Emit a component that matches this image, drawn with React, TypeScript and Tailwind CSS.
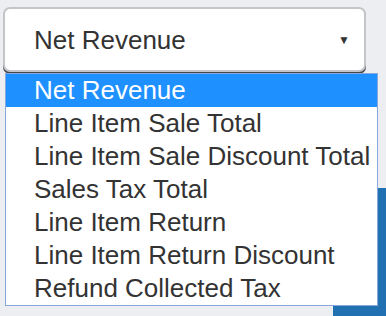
import React, { useState } from 'react'

const options = [
  'Net Revenue',
  'Line Item Sale Total',
  'Line Item Sale Discount Total',
  'Sales Tax Total',
  'Line Item Return',
  'Line Item Return Discount',
  'Refund Collected Tax',
]

export default function App() {
  const [selected, setSelected] = useState(options[0])

  return (
    <div className="relative h-[316px] w-[386px] overflow-hidden bg-[#eceef1] font-['Liberation_Sans',Arial,sans-serif]">
      {/* select box */}
      <div className="ml-[3px] mt-[7px] flex h-[65px] w-[363px] items-center justify-between rounded-[7px] border-2 border-[#c3c5c8] bg-white pl-[29px] pr-[14px] shadow-[0_2px_0_#45484c]">
        <span className="text-[26px] leading-none text-[#333]">{selected}</span>
        <span className="text-[12px] leading-none text-[#333]">▼</span>
      </div>

      {/* button behind the menu */}
      <div className="ml-[333px] mt-[116px] h-[130px] w-[53px] bg-[#2170b2]" />

      {/* open dropdown */}
      <ul className="absolute left-[5px] top-[73px] w-[373px] border border-[#86a8dc] bg-white">
        {options.map((o) => (
          <li
            key={o}
            onClick={() => setSelected(o)}
            className={
              o === selected
                ? 'h-[33px] whitespace-nowrap bg-[#1e90ff] pl-[28px] text-[26px] leading-[33px] text-white'
                : 'h-[33px] whitespace-nowrap pl-[28px] text-[26px] leading-[33px] text-[#333]'
            }
          >
            {o}
          </li>
        ))}
      </ul>
    </div>
  )
}
